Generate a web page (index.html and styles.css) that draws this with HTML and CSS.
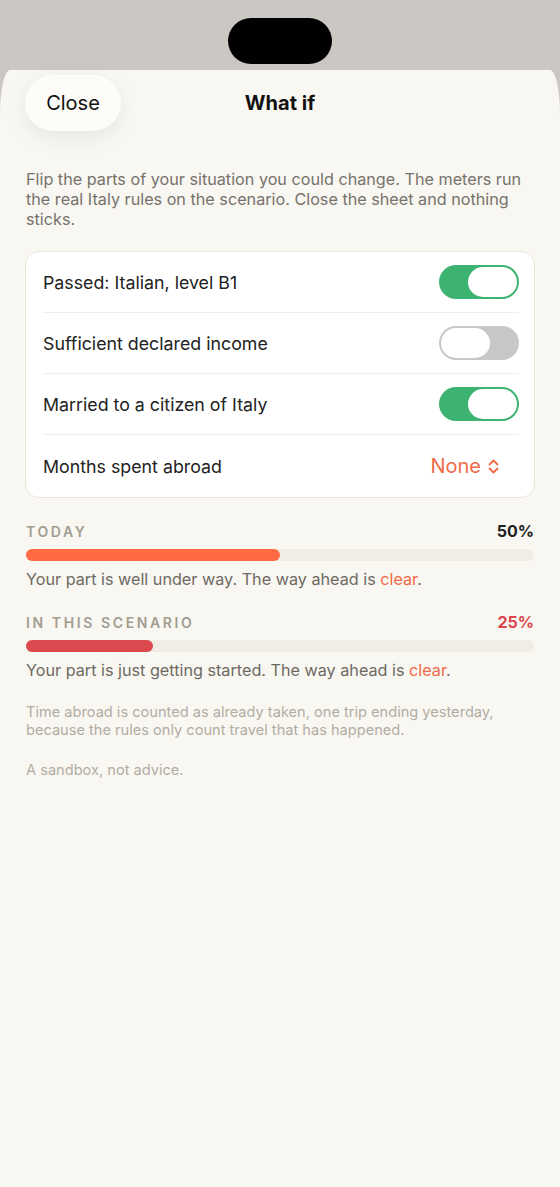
FILE: index.html
```html
<!DOCTYPE html>
<html>
    <head>
        <meta charset="UTF-8">
        <link rel="stylesheet" href="styles.css">
    </head>
    <body>
        <div class="status-bar">
            <div class="island"></div>
        </div>

        <div class="sheet">
            <div class="sheet-header">
                <button class="close-btn">Close</button>
                <div class="sheet-title">What if</div>
                <div></div>
            </div>

            <p class="intro">Flip the parts of your situation you could change. The meters run the real Italy rules on the scenario. Close the sheet and nothing sticks.</p>

            <div class="card">
                <div class="row">
                    <span class="row-label">Passed: Italian, level B1</span>
                    <span class="toggle on"><span class="knob"></span></span>
                </div>
                <div class="row">
                    <span class="row-label">Sufficient declared income</span>
                    <span class="toggle"><span class="knob"></span></span>
                </div>
                <div class="row">
                    <span class="row-label">Married to a citizen of Italy</span>
                    <span class="toggle on"><span class="knob"></span></span>
                </div>
                <div class="row last">
                    <span class="row-label">Months spent abroad</span>
                    <span class="picker">None
                        <svg width="13" height="17" viewBox="0 0 13 17">
                            <path d="M2.5 6.5 L6.5 2.5 L10.5 6.5 M2.5 10.5 L6.5 14.5 L10.5 10.5" fill="none" stroke="#f06a48" stroke-width="1.8" stroke-linecap="round" stroke-linejoin="round"/>
                        </svg>
                    </span>
                </div>
            </div>

            <div class="meter">
                <div class="meter-head">
                    <span class="meter-label">TODAY</span>
                    <span class="meter-pct">50%</span>
                </div>
                <div class="track"><div class="fill fill-today" style="width: 50%"></div></div>
                <p class="meter-text">Your part is well under way. The way ahead is <span class="accent">clear</span>.</p>
            </div>

            <div class="meter">
                <div class="meter-head">
                    <span class="meter-label">IN THIS SCENARIO</span>
                    <span class="meter-pct red">25%</span>
                </div>
                <div class="track"><div class="fill fill-scenario" style="width: 25%"></div></div>
                <p class="meter-text">Your part is just getting started. The way ahead is <span class="accent">clear</span>.</p>
            </div>

            <p class="footnote">Time abroad is counted as already taken, one trip ending yesterday, because the rules only count travel that has happened.</p>
            <p class="footnote disclaimer">A sandbox, not advice.</p>
        </div>
    </body>
</html>
```

FILE: styles.css
```css
body{
    margin: 0;
    width: 560px;
    height: 1187px;
    overflow: hidden;
    background-color: #cbc8c3;
    font-family: Inter, "Noto Sans", sans-serif;
}

/* 顶部状态栏 */
.status-bar{
    height: 70px;
    display: flex;
    justify-content: center;
}

.island{
    margin-top: 18px;
    width: 104px;
    height: 46px;
    border-radius: 23px;
    background: #000;
}

/* 弹出面板 */
.sheet{
    height: 1117px;
    padding: 0 25px;
    background: #f9f7f2;
    border-radius: 10px 10px 0 0 / 44px 44px 0 0;
}

.sheet-header{
    display: grid;
    grid-template-columns: 1fr auto 1fr;
    align-items: center;
    padding-top: 5px;
}

.close-btn{
    justify-self: start;
    width: 96px;
    height: 56px;
    border: none;
    border-radius: 28px;
    background: #fdfcf8;
    box-shadow: 0 6px 22px rgba(0, 0, 0, 0.07);
    font-family: Inter, "Noto Sans", sans-serif;
    font-size: 20px;
    color: #111;
}

.sheet-title{
    font-size: 20px;
    font-weight: 700;
    color: #111;
}

.intro{
    margin: 38px 1px 0;
    font-size: 16.2px;
    line-height: 20px;
    color: #76726b;
}

/* 开关卡片 */
.card{
    margin-top: 22px;
    background: #fff;
    border: 1px solid #ece7dc;
    border-radius: 14px;
}

.row{
    margin: 0 15px 0 17px;
    height: 60px;
    display: flex;
    align-items: center;
    justify-content: space-between;
    border-bottom: 1px solid #f1eee8;
}

.row.last{
    border-bottom: none;
    height: 62px;
}

.row-label{
    font-size: 17.8px;
    color: #222;
}

.toggle{
    width: 80px;
    height: 34px;
    box-sizing: border-box;
    padding: 2px;
    border-radius: 17px;
    background: #c7c7c7;
    display: flex;
}

.toggle.on{
    background: #3cb371;
    justify-content: flex-end;
}

.knob{
    width: 49px;
    height: 30px;
    border-radius: 15px;
    background: #fff;
}

.picker{
    margin-right: 19px;
    display: flex;
    align-items: center;
    gap: 6px;
    font-size: 20px;
    color: #f06a48;
}

/* 进度条区域 */
.meter{
    margin: 24px 1px 0;
}

.meter-head{
    display: flex;
    justify-content: space-between;
    align-items: center;
    height: 18px;
}

.meter-label{
    font-size: 14px;
    font-weight: 600;
    letter-spacing: 2.6px;
    color: #a29d90;
}

.meter-pct{
    font-size: 16px;
    font-weight: 700;
    color: #222;
}

.meter-pct.red{ color: #d9474c;}

.track{
    margin-top: 9px;
    height: 12px;
    border-radius: 6px;
    background: #f1ede4;
}

.fill{
    height: 100%;
    border-radius: 6px;
}

.fill-today{ background: #ff6a45;}
.fill-scenario{ background: #dc4a50;}

.meter-text{
    margin: 8px 0 0;
    font-size: 16.2px;
    line-height: 20px;
    color: #6e6a63;
}

.accent{ color: #f06a48;}

.footnote{
    margin: 23px 1px 0;
    font-size: 14.6px;
    line-height: 18px;
    color: #b2ada3;
}

.footnote.disclaimer{ margin-top: 22px;}
```
